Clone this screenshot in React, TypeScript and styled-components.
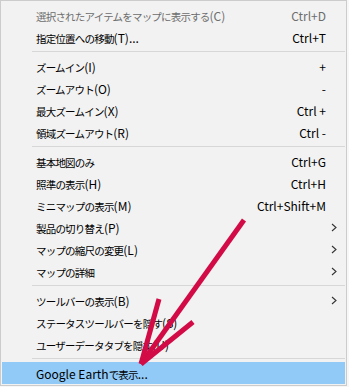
import * as React from 'react';
import styled, {createGlobalStyle} from 'styled-components';

interface IItem {
  label: string;
  shortcut?: string;
  submenu?: boolean;
  disabled?: boolean;
  active?: boolean;
}

const groups: IItem[][] = [
  [
    {label: '選択されたアイテムをマップに表示する(C)', shortcut: 'Ctrl+D', disabled: true},
    {label: '指定位置への移動(T)...', shortcut: 'Ctrl+T'},
  ],
  [
    {label: 'ズームイン(I)', shortcut: '+'},
    {label: 'ズームアウト(O)', shortcut: '-'},
    {label: '最大ズームイン(X)', shortcut: 'Ctrl +'},
    {label: '領域ズームアウト(R)', shortcut: 'Ctrl -'},
  ],
  [
    {label: '基本地図のみ', shortcut: 'Ctrl+G'},
    {label: '照準の表示(H)', shortcut: 'Ctrl+H'},
    {label: 'ミニマップの表示(M)', shortcut: 'Ctrl+Shift+M'},
    {label: '製品の切り替え(P)', submenu: true},
    {label: 'マップの縮尺の変更(L)', submenu: true},
    {label: 'マップの詳細', submenu: true},
  ],
  [
    {label: 'ツールバーの表示(B)', submenu: true},
    {label: 'ステータスツールバーを隠す(S)'},
    {label: 'ユーザーデータタブを隠す(U)'},
  ],
  [{label: 'Google Earthで表示...', active: true}],
];

const cjkRun = /([\u3000-\u30ff\u4e00-\u9fff\uff00-\uffef]+)/;

const renderLabel = (text: string) =>
  text.split(cjkRun).map((part, i) =>
    i % 2 === 1 ? <Cjk key={i}>{part}</Cjk> : <React.Fragment key={i}>{part}</React.Fragment>,
  );

export default function App() {
  return (
    <>
      <GlobalStyle />
      <Menu>
        {groups.map((group, gi) => (
          <React.Fragment key={gi}>
            {gi > 0 && <Separator />}
            {group.map((item) => (
              <Row key={item.label} $active={item.active} $disabled={item.disabled}>
                <Label>{renderLabel(item.label)}</Label>
                <Shortcut>{item.shortcut}</Shortcut>
                <Chevron>{item.submenu && <ChevronIcon />}</Chevron>
              </Row>
            ))}
          </React.Fragment>
        ))}
        <Arrow viewBox="0 0 349 387" width="349" height="387">
          <g stroke="#d20a45" strokeWidth="5" fill="none">
            <line x1="244" y1="220" x2="141" y2="364" />
            <line x1="159" y1="299" x2="141" y2="364" />
            <line x1="193" y1="322" x2="141" y2="364" />
          </g>
        </Arrow>
      </Menu>
    </>
  );
}

const ChevronIcon = () => (
  <svg width="6" height="9" viewBox="0 0 6 9">
    <path d="M1 1 L5 4.5 L1 8" stroke="#333" strokeWidth="1.1" fill="none" />
  </svg>
);

const GlobalStyle = createGlobalStyle`
  html, body {
    margin: 0;
    padding: 0;
    background: #f7f7f7;
  }
  body {
    font-family: "Noto Sans CJK JP", "Noto Sans", sans-serif;
    font-size: 12px;
  }
`;

const Menu = styled.div`
  position: relative;
  width: 345px;
  padding: 3px 0 1px;
  background: #f2f2f2;
  border: 1px solid #cccccc;
`;

const Row = styled.div<{$active?: boolean; $disabled?: boolean}>`
  display: grid;
  grid-template-columns: 1fr auto 19px;
  align-items: center;
  height: 22px;
  margin: 0 1px;
  padding-left: 34px;
  color: ${(p) => (p.$disabled ? '#6d6d6d' : '#000')};
  background: ${(p) => (p.$active ? '#91c9f7' : 'transparent')};
`;

const Label = styled.span`
  white-space: nowrap;
`;

const Cjk = styled.span`
  font-size: 10.5px;
  letter-spacing: -0.8px;
`;

const Shortcut = styled.span`
  white-space: nowrap;
  text-align: right;
`;

const Chevron = styled.span`
  display: flex;
  justify-content: center;
  padding-right: 3px;
`;

const Separator = styled.div`
  height: 7px;
  margin-left: 31px;
  margin-right: 1px;
  display: flex;
  align-items: center;
  &::after {
    content: '';
    flex: 1;
    border-top: 1px solid #d7d7d7;
  }
`;

const Arrow = styled.svg`
  position: absolute;
  left: -1px;
  top: -1px;
  pointer-events: none;
`;
